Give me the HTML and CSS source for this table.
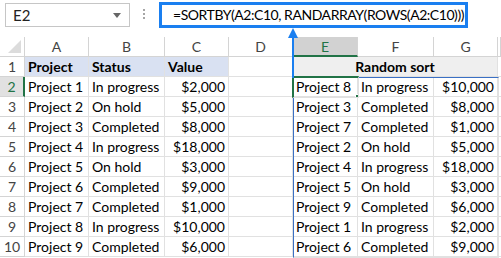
FILE: index.html
```html
<!DOCTYPE html>
<html lang="en">
<head>
  <meta charset="UTF-8" />
  <meta name="viewport" content="width=device-width, initial-scale=1.0" />
  <title>SORTBY random sort</title>
  <link rel="stylesheet" href="styles.css">
</head>
<body>

  <div class="bar">
    <div class="namebox">E2<span class="caret"></span></div>
    <div class="dots"><i></i><i></i><i></i></div>
    <div class="formula">=SORTBY(A2:C10, RANDARRAY(ROWS(A2:C10)))</div>
  </div>

  <div class="sheet">
    <div class="hd corner"></div>
    <div class="hd">A</div><div class="hd">B</div><div class="hd">C</div><div class="hd">D</div>
    <div class="hd active-col">E</div><div class="hd">F</div><div class="hd">G</div><div class="hd"></div>

    <div class="rn">1</div>
    <div class="c th">Project</div><div class="c th">Status</div><div class="c th">Value</div><div class="c"></div>
    <div class="c title">Random sort</div><div class="c"></div>

    <div class="rn active-row">2</div>
    <div class="c">Project 1</div><div class="c">In progress</div><div class="c num">$2,000</div><div class="c"></div>
    <div class="c">Project 8</div><div class="c">In progress</div><div class="c num">$10,000</div><div class="c"></div>

    <div class="rn">3</div>
    <div class="c">Project 2</div><div class="c">On hold</div><div class="c num">$5,000</div><div class="c"></div>
    <div class="c">Project 3</div><div class="c">Completed</div><div class="c num">$8,000</div><div class="c"></div>

    <div class="rn">4</div>
    <div class="c">Project 3</div><div class="c">Completed</div><div class="c num">$8,000</div><div class="c"></div>
    <div class="c">Project 7</div><div class="c">Completed</div><div class="c num">$1,000</div><div class="c"></div>

    <div class="rn">5</div>
    <div class="c">Project 4</div><div class="c">In progress</div><div class="c num">$18,000</div><div class="c"></div>
    <div class="c">Project 2</div><div class="c">On hold</div><div class="c num">$5,000</div><div class="c"></div>

    <div class="rn">6</div>
    <div class="c">Project 5</div><div class="c">On hold</div><div class="c num">$3,000</div><div class="c"></div>
    <div class="c">Project 4</div><div class="c">In progress</div><div class="c num">$18,000</div><div class="c"></div>

    <div class="rn">7</div>
    <div class="c">Project 6</div><div class="c">Completed</div><div class="c num">$9,000</div><div class="c"></div>
    <div class="c">Project 5</div><div class="c">On hold</div><div class="c num">$3,000</div><div class="c"></div>

    <div class="rn">8</div>
    <div class="c">Project 7</div><div class="c">Completed</div><div class="c num">$1,000</div><div class="c"></div>
    <div class="c">Project 9</div><div class="c">Completed</div><div class="c num">$6,000</div><div class="c"></div>

    <div class="rn">9</div>
    <div class="c">Project 8</div><div class="c">In progress</div><div class="c num">$10,000</div><div class="c"></div>
    <div class="c">Project 1</div><div class="c">In progress</div><div class="c num">$2,000</div><div class="c"></div>

    <div class="rn">10</div>
    <div class="c">Project 9</div><div class="c">Completed</div><div class="c num">$6,000</div><div class="c"></div>
    <div class="c">Project 6</div><div class="c">Completed</div><div class="c num">$9,000</div><div class="c"></div>

    <!-- spill range, active cell and the arrow from the formula -->
    <div class="spill"></div>
    <div class="sel"><span class="handle"></span></div>
  </div>

  <svg class="arrow" width="12" height="50" viewBox="0 0 12 50">
    <path d="M6 0 L11 10 L1 10 Z" fill="#1a7ff0" />
    <rect x="5" y="8" width="2" height="42" fill="#1a7ff0" />
  </svg>

</body>
</html>
```

FILE: styles.css
```css
body { margin: 0; width: 501px; height: 258px; overflow: hidden; background: #fff; font-family: "Lato", "Liberation Sans", sans-serif; font-size: 14px; color: #000; position: relative; }

.bar { height: 37px; position: relative; }
.namebox { position: absolute; left: 5px; top: 3px; width: 125px; height: 24px; box-sizing: border-box; border: 1px solid #c6c6c6; padding-left: 7px; line-height: 22px; color: #222; font-size: 15px; }
.caret { position: absolute; right: 8px; top: 9px; border-left: 4px solid transparent; border-right: 4px solid transparent; border-top: 5px solid #666; }
.dots { position: absolute; left: 143px; top: 9px; display: flex; flex-direction: column; gap: 2px; }
.dots i { display: block; width: 2px; height: 2px; background: #a6a6a6; }
.formula { position: absolute; left: 159px; top: 2px; width: 309px; height: 26px; box-sizing: border-box; border: 3px solid #1a7ff0; padding-left: 11px; line-height: 20px; white-space: nowrap; letter-spacing: -0.45px; }

.sheet { display: grid; grid-template-columns: 25px 64px 76px 64px 64px 65px 76px 64px 3px; grid-auto-rows: 20px; position: relative; }
.sheet > div { box-sizing: border-box; border-right: 1px solid #e1e1e1; border-bottom: 1px solid #e1e1e1; line-height: 19px; white-space: nowrap; overflow: hidden; }

.hd { text-align: center; color: #444; border-color: #d4d4d4 !important; }
.corner { position: relative; }
.corner::after { content: ""; position: absolute; right: 3px; bottom: 3px; border-left: 13px solid transparent; border-bottom: 13px solid #dcdcdc; }
.active-col { background: #d2d2d2; color: #217346; border-bottom: 2px solid #217346 !important; }

.rn { text-align: center; color: #444; border-color: #d4d4d4 !important; }
.active-row { background: #e1e1e1; color: #217346; border-right: 2px solid #217346 !important; }

.c { padding: 0 3px; }
.num { text-align: right; }
.th { background: #d9e1f2; font-weight: bold; }
.title { grid-column: span 3; background: #efefef; font-weight: bold; text-align: center; }

.spill { position: absolute; left: 293px; top: 40px; width: 206px; height: 181px; box-sizing: border-box; border: 1px solid #3b70c4; }
.sel { position: absolute; left: 292px; top: 39px; width: 67px; height: 22px; box-sizing: border-box; border: 2px solid #217346; }
.handle { position: absolute; right: -4px; bottom: -4px; width: 5px; height: 5px; background: #217346; border: 1px solid #fff; }

.arrow { position: absolute; left: 287px; top: 28px; }
```
